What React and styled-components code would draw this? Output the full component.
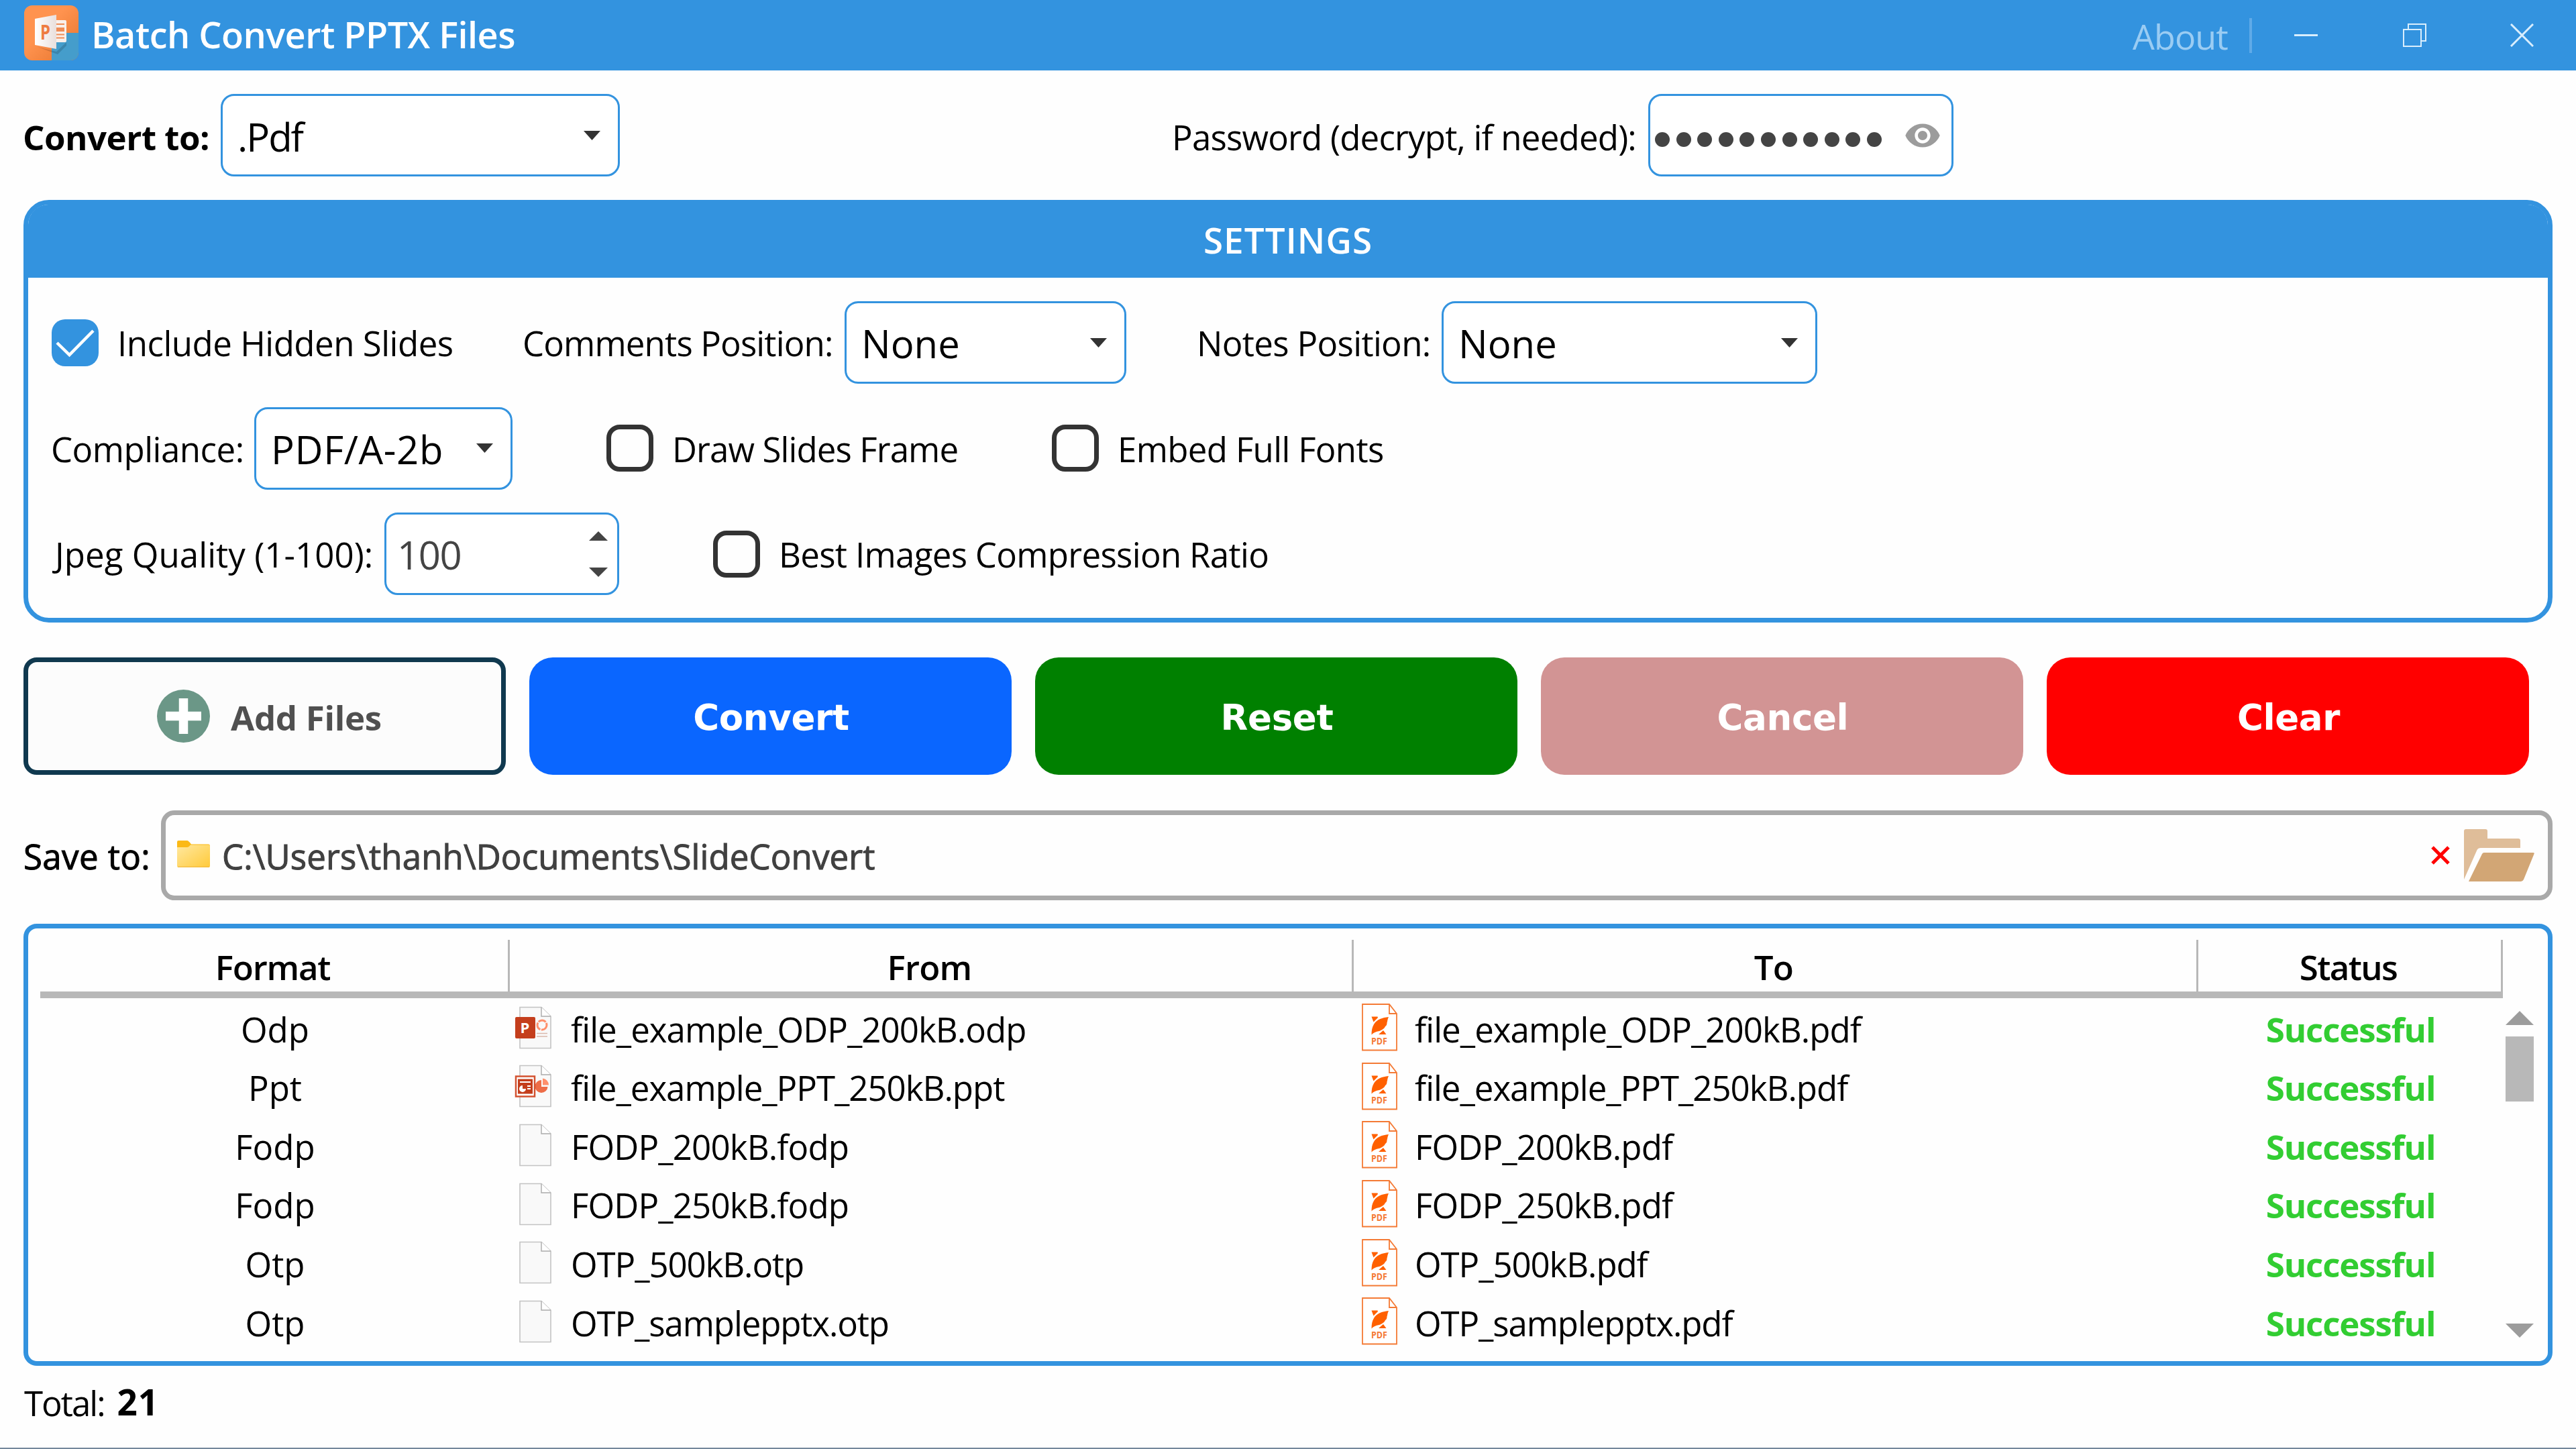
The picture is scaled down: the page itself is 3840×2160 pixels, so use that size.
import React from "react";
import styled, { createGlobalStyle } from "styled-components";
import { MdVisibility } from "react-icons/md";

const blue = "#3393df";

const GlobalStyle = createGlobalStyle`
  * {
    box-sizing: border-box;
  }

  body {
    margin: 0;
    background: #fefefe;
    color: #000;
    font-family: "Open Sans", "Noto Sans", sans-serif;
    font-size: 51px;
    line-height: 1.3;
  }
`;

const Window = styled.div`
  width: 3840px;
  height: 2160px;
  display: flex;
  flex-direction: column;
  overflow: hidden;
  white-space: nowrap;
`;

const TitleBar = styled.header`
  display: flex;
  align-items: center;
  flex: none;
  height: 105px;
  padding: 0 63px 0 36px;
  background: ${blue};
  color: #fff;
`;

const Logo = styled.svg`
  width: 81px;
  height: 82px;
  margin-bottom: 7px;
`;

const Title = styled.h1`
  flex: 1;
  margin: 0 0 0 19px;
  padding-bottom: 3px;
  font-size: 54px;
  font-weight: 600;
  letter-spacing: -0.52px;
`;

const About = styled.a`
  padding-top: 2px;
  margin-right: 32px;
  color: #9accf3;
  font-size: 52px;
  letter-spacing: -0.9px;
`;

const Divider = styled.span`
  width: 4px;
  height: 52px;
  background: #5faae8;
`;

const WindowIcon = styled.svg`
  width: 35px;
  height: 35px;
  margin-left: ${({ gap }) => gap}px;
  fill: none;
  stroke: #d9eefd;
  stroke-width: ${({ weight }) => weight || 3};
`;

const TopRow = styled.div`
  display: flex;
  align-items: center;
  flex: none;
  height: 123px;
  margin: 35px 35px 0 34px;
`;

const Label = styled.label`
  flex: none;
  width: ${({ width }) => width}px;
  margin-left: ${({ gap }) => gap || 0}px;
  padding-top: ${({ drop }) => drop || 2}px;
  font-weight: ${({ weight }) => weight || 400};
  letter-spacing: ${({ track }) => track || 0}px;
`;

const SaveLabel = styled(Label)`
  -webkit-text-stroke: 1px #000;
`;

const Field = styled.div`
  display: flex;
  align-items: center;
  flex: none;
  width: ${({ width }) => width}px;
  height: 123px;
  padding: 0 26px 0 22px;
  background: #fff;
  border: 3px solid ${blue};
  border-radius: 20px;
`;

const Value = styled.span`
  flex: 1;
  padding-top: ${({ drop }) => drop || 3}px;
  font-size: 58px;
  letter-spacing: ${({ track }) => track || 0}px;
`;

const Caret = styled.svg`
  width: 25px;
  height: 14px;
  fill: #333;
`;

const PasswordField = styled(Field)`
  padding: 0 15px 0 7px;
  justify-content: space-between;
`;

const Dots = styled.div`
  display: flex;
  gap: 9.6px;
  margin-top: 13px;
`;

const Dot = styled.i`
  width: 22px;
  height: 22px;
  border-radius: 50%;
  background: #444;
`;

const Eye = styled(MdVisibility)`
  width: 56px;
  height: 56px;
  color: #9c9c9c;
`;

const SpinnerField = styled(Field)`
  padding: 0 14px 0 16px;
  color: #444;
`;

const Spinner = styled.div`
  display: flex;
  flex-direction: column;
  gap: 40px;

  svg {
    width: 28px;
    height: 14px;
    fill: #444;
  }
`;

const Settings = styled.section`
  flex: none;
  height: 630px;
  margin: 35px 35px 0;
  border: 7px solid ${blue};
  border-radius: 38px;
`;

const SettingsTitle = styled.h2`
  height: 109px;
  margin: 0;
  padding-top: 19px;
  background: ${blue};
  border-radius: 30px 30px 0 0;
  color: #fff;
  font-size: 53px;
  font-weight: 600;
  letter-spacing: 1.04px;
  text-align: center;
`;

const SettingsBody = styled.div`
  display: flex;
  flex-direction: column;
  gap: 34.5px;
  padding: 35px 35px 0 31px;
`;

const SettingsRow = styled.div`
  display: flex;
  align-items: center;
  height: 123px;
`;

const Box = styled.span`
  display: flex;
  flex: none;
  width: 70px;
  height: 70px;
  margin-left: ${({ gap }) => gap}px;
  background: ${({ checked }) => (checked ? blue : "transparent")};
  border: ${({ checked }) => (checked ? "none" : "7px solid #333")};
  border-radius: 20px;

  svg {
    width: 70px;
    height: 70px;
    fill: none;
    stroke: #fff;
    stroke-width: 4.5;
  }
`;

const Actions = styled.div`
  display: grid;
  grid-template-columns: repeat(5, 719px);
  gap: 35px;
  flex: none;
  height: 175px;
  margin: 52px 0 0 35px;
`;

const Button = styled.button`
  padding: 4px 0 0 2px;
  border: none;
  border-radius: 35px;
  background: ${({ color }) => color};
  color: #fff;
  font: bold 53px "DejaVu Sans", sans-serif;
  letter-spacing: -0.35px;
`;

const AddButton = styled.button`
  display: flex;
  align-items: center;
  padding: 0 0 0 192px;
  border: 7px solid #10394f;
  border-radius: 20px;
  background: #fcfcfc;
  color: #505050;
  font: 700 51px "Open Sans", sans-serif;
  letter-spacing: -0.3px;

  svg {
    width: 79px;
    height: 79px;
    margin-right: 31px;
  }

  span {
    padding-top: 3px;
  }
`;

const SaveRow = styled.div`
  display: flex;
  align-items: center;
  flex: none;
  height: 134px;
  margin: 53px 35px 0;
`;

const PathField = styled.div`
  display: flex;
  align-items: center;
  flex: 1;
  height: 134px;
  padding: 0 20px 0 17px;
  border: 7px solid #a9a9a9;
  border-radius: 20px;
`;

const Path = styled.span`
  flex: 1;
  padding: 3px 0 0 18px;
  color: #404040;
  font-weight: 500;
  letter-spacing: 0.1px;
  -webkit-text-stroke: 1px #404040;
`;

const FolderIcon = styled.svg`
  width: 49px;
  height: 40px;
  margin-bottom: 4px;
`;

const ClearIcon = styled.svg`
  width: 28px;
  height: 28px;
  margin-right: 21px;
  stroke: #f00;
  stroke-width: 5;
`;

const OpenFolderIcon = styled.svg`
  width: 105px;
  height: 78px;
`;

const Table = styled.section`
  display: flex;
  flex: none;
  height: 659px;
  margin: 35px 35px 0;
  padding: 17px 20px 0 18px;
  border: 7px solid ${blue};
  border-radius: 20px;
`;

const Grid = styled.div`
  width: 3671px;
`;

const GridRow = styled.div`
  display: grid;
  grid-template-columns: 700px 1258px 1259px 454px;
  align-items: center;
  height: 87.6px;
`;

const GridHead = styled(GridRow)`
  height: 87px;
  align-items: stretch;
  border-bottom: 10px solid #b8b8b8;
`;

const HeadCell = styled.div`
  padding: 7px 4px 0 0;
  border-right: 3px solid #b8b8b8;
  font-weight: 600;
  letter-spacing: ${({ track }) => track}px;
  text-align: center;
`;

const Cell = styled.div`
  padding-top: 4px;
  text-align: center;
`;

const FileCell = styled.div`
  display: flex;
  align-items: center;
  padding-left: ${({ inset }) => inset}px;

  span {
    padding: 4px 0 0 ${({ space }) => space || 28}px;
    letter-spacing: ${({ track }) => track || -1}px;
  }
`;

const Status = styled(Cell)`
  color: #32cd32;
  font-weight: 700;
  letter-spacing: -1.1px;
`;

const DocSvg = styled.svg`
  width: 56px;
  height: 64px;
`;

const PdfSvg = styled.svg`
  width: 53px;
  height: 71px;
`;

const ScrollBar = styled.div`
  display: flex;
  flex-direction: column;
  align-items: center;
  width: 42px;
  height: 487px;
  margin: 106px 0 0 4px;

  svg {
    width: 42px;
    height: 21px;
    fill: #9c9c9c;
  }
`;

const Thumb = styled.div`
  width: 42px;
  height: 97px;
  margin: 17px 0 auto;
  background: #b8b8b8;
`;

const Footer = styled.footer`
  display: flex;
  flex: 1;
  padding: 22px 0 0 36px;
  border-bottom: 2px solid #74879b;
  letter-spacing: -2px;

  strong {
    margin-left: 19px;
    font-size: 53px;
    line-height: 64px;
    letter-spacing: 1px;
  }
`;

const Down = () => (
  <Caret viewBox="0 0 25 14">
    <path d="M0 0h25L12.5 14z" />
  </Caret>
);

const Select = ({ width, value, track, drop }) => (
  <Field width={width}>
    <Value track={track} drop={drop}>
      {value}
    </Value>
    <Down />
  </Field>
);

const AppLogo = () => (
  <Logo viewBox="0 0 81 82">
    <defs>
      <linearGradient id="door" x1="0" x2="1">
        <stop offset="0" stopColor="#fff" />
        <stop offset="1" stopColor="#e9dfdc" />
      </linearGradient>
      <linearGradient id="shade" x1="0" y1="0" x2="1" y2="1">
        <stop offset="0.4" stopColor="#ff934f" />
        <stop offset="1" stopColor="#e5732c" />
      </linearGradient>
      <clipPath id="tile">
        <rect width="81" height="82" rx="12" />
      </clipPath>
    </defs>
    <g clipPath="url(#tile)">
      <rect width="81" height="82" fill="url(#shade)" />
      <rect x="41" y="41" width="40" height="41" fill="#459dcb" />
    </g>
    <path d="M20 62L48 69L63 55V60L50 73z" fill="#000" opacity="0.15" />
    <rect x="46" y="22" width="17" height="33" rx="2" fill="#f8f0ec" />
    <path d="M48 28h12M48 43.5h12M48 48.5h12" stroke="#ef8d57" strokeWidth="1.8" />
    <rect x="48" y="33" width="12" height="6" fill="#ef8d57" />
    <path d="M16 20L48 14V65L16 59z" fill="url(#door)" />
    <text x="24" y="51" fontSize="31" fontWeight="700" fill="#ee7c42" textLength="15" lengthAdjust="spacingAndGlyphs">
      P
    </text>
  </Logo>
);

const DocIcon = ({ kind }) => (
  <DocSvg viewBox="0 0 56 64">
    <path d="M8 1.5H40L54 15V62.5H8z" fill="#f9f9f9" stroke="#c3c3c3" strokeWidth="1.6" />
    <path d="M40 1.5V15H54" fill="#fff" stroke="#aaa" strokeWidth="1.4" />
    {kind === "odp" && (
      <>
        <circle cx="41" cy="28" r="7" fill="none" stroke="#ff8f6b" strokeWidth="3" strokeDasharray="12 1.5" />
        <path d="M33 40.5H49M33 45H49" stroke="#d9b8ac" strokeWidth="1.5" />
        <rect x="1" y="16" width="30" height="32" rx="2" fill="#c43e1c" />
        <text x="8.5" y="40" fontSize="22" fontWeight="700" fill="#fff">
          P
        </text>
      </>
    )}
    {kind === "ppt" && (
      <>
        <path d="M40 23V33H49.5A9.5 9.5 0 1 1 40 23z" fill="#ed6c47" />
        <path d="M42 20.5A10 10 0 0 1 51 30.5H42z" fill="#ff8f6b" />
        <rect x="2" y="17.5" width="28" height="30" fill="#fff" stroke="#d35230" strokeWidth="2.5" />
        <rect x="5" y="21.5" width="22" height="22" fill="#c43e1c" />
        <path d="M8 26H24M19 32H24M19 36H24" stroke="#fff" strokeWidth="2" />
        <path d="M12 31V36H17A5 5 0 1 1 12 31z" fill="#fff" />
      </>
    )}
  </DocSvg>
);

const PdfIcon = () => (
  <PdfSvg viewBox="0 0 53 71">
    <path d="M1 1H41L52 15V69.5H1z" fill="#fff" stroke="#f47a35" strokeWidth="1.8" />
    <path d="M41 1V15H52" fill="none" stroke="#f47a35" strokeWidth="1.8" />
    <path
      d="M14.5 19.5H23.5L24 21L17.5 27.5zM40 20C38 24 38.5 26 37.5 28.5C37.5 31 37 33 35 34C34 37 30 39.5 26 41C21 42 17 43.5 14.5 46.5C14.5 40 15.5 35 18 31C22 24 30 21 40 20zM32 40L36.5 46H25z"
      fill="#ff6000"
    />
    <text x="14" y="60.5" fontSize="13.5" fontWeight="700" fill="#f47a35" textLength="24" lengthAdjust="spacingAndGlyphs">
      PDF
    </text>
  </PdfSvg>
);

const actions = [
  { text: "Convert", color: "#0a66ff" },
  { text: "Reset", color: "#008000" },
  { text: "Cancel", color: "#d29494" },
  { text: "Clear", color: "#ff0000" },
];

const files = [
  { format: "Odp", name: "file_example_ODP_200kB", ext: "odp", kind: "odp", track: -0.95 },
  { format: "Ppt", name: "file_example_PPT_250kB", ext: "ppt", kind: "ppt", track: -1.02 },
  { format: "Fodp", name: "FODP_200kB", ext: "fodp", track: -0.85 },
  { format: "Fodp", name: "FODP_250kB", ext: "fodp", track: -0.85 },
  { format: "Otp", name: "OTP_500kB", ext: "otp", track: -1.1 },
  { format: "Otp", name: "OTP_samplepptx", ext: "otp", track: -1.12 },
];

const App = () => {
  return (
    <Window>
      <GlobalStyle />
      <TitleBar>
        <AppLogo />
        <Title>Batch Convert PPTX Files</Title>
        <About>About</About>
        <Divider />
        <WindowIcon viewBox="0 0 35 35" gap={63}>
          <path d="M0 17.5H35" />
        </WindowIcon>
        <WindowIcon viewBox="0 0 35 35" gap={127} weight={2}>
          <path d="M1 9H27V34H1zM8 9V1H34V26H27" />
        </WindowIcon>
        <WindowIcon viewBox="0 0 35 35" gap={125}>
          <path d="M1 1L34 34M34 1L1 34" />
        </WindowIcon>
      </TitleBar>

      <TopRow>
        <Label width={295} weight={700} track={-0.5} drop={5}>
          Convert to:
        </Label>
        <Select width={595} value=".Pdf" track={-2} drop={5} />
        <Label width={710} gap={823} track={-0.8} drop={5}>
          Password (decrypt, if needed):
        </Label>
        <PasswordField width={455}>
          <Dots>
            {Array.from({ length: 11 }, (_, index) => (
              <Dot key={index} />
            ))}
          </Dots>
          <Eye />
        </PasswordField>
      </TopRow>

      <Settings>
        <SettingsTitle>SETTINGS</SettingsTitle>
        <SettingsBody>
          <SettingsRow>
            <Box checked gap={4}>
              <svg viewBox="0 0 70 70">
                <path d="M8 35L26.5 53L62 17" />
              </svg>
            </Box>
            <Label width={604} gap={28} track={-0.5}>
              Include Hidden Slides
            </Label>
            <Label width={480} track={-0.85}>
              Comments Position:
            </Label>
            <Select width={420} value="None" />
            <Label width={365} gap={105} track={-0.66}>
              Notes Position:
            </Label>
            <Select width={560} value="None" />
          </SettingsRow>
          <SettingsRow>
            <Label width={303} gap={3} track={-0.5}>
              Compliance:
            </Label>
            <Select width={385} value="PDF/A-2b" track={0.6} />
            <Box gap={140} />
            <Label width={566} gap={28} track={-0.9}>
              Draw Slides Frame
            </Label>
            <Box gap={0} />
            <Label gap={28} track={-0.66}>
              Embed Full Fonts
            </Label>
          </SettingsRow>
          <SettingsRow>
            <Label width={491} gap={9} track={0.06}>
              Jpeg Quality (1-100):
            </Label>
            <SpinnerField width={350}>
              <Value track={-1.4}>100</Value>
              <Spinner>
                <svg viewBox="0 0 28 14">
                  <path d="M0 14H28L14 0z" />
                </svg>
                <svg viewBox="0 0 28 14">
                  <path d="M0 0H28L14 14z" />
                </svg>
              </Spinner>
            </SpinnerField>
            <Box gap={140} />
            <Label gap={28} track={-0.68}>
              Best Images Compression Ratio
            </Label>
          </SettingsRow>
        </SettingsBody>
      </Settings>

      <Actions>
        <AddButton>
          <svg viewBox="0 0 79 79">
            <circle cx="39.5" cy="39.5" r="39.5" fill="#6b9787" />
            <path d="M13 39.5H66M39.5 13V66" stroke="#fff" strokeWidth="13.5" />
          </svg>
          <span>Add Files</span>
        </AddButton>
        {actions.map(({ text, color }) => (
          <Button key={text} color={color}>
            {text}
          </Button>
        ))}
      </Actions>

      <SaveRow>
        <SaveLabel width={205} weight={500} track={0.4}>
          Save to:
        </SaveLabel>
        <PathField>
          <FolderIcon viewBox="0 0 49 40">
            <defs>
              <linearGradient id="folder" x1="0" y1="0" x2="1" y2="1">
                <stop offset="0" stopColor="#ffe8a0" />
                <stop offset="1" stopColor="#ffca3a" />
              </linearGradient>
            </defs>
            <path d="M0 2Q0 0 2 0H15Q17 0 21 5.5H47Q49 5.5 49 8V20H0z" fill="#fbb916" />
            <path d="M0 10H15Q17 10 20 6.5H47Q49 6.5 49 8V38Q49 40 47 40H2Q0 40 0 38z" fill="url(#folder)" />
            <path d="M1 39.2H48" stroke="#f0b63c" />
          </FolderIcon>
          <Path>C:\Users\thanh\Documents\SlideConvert</Path>
          <ClearIcon viewBox="0 0 28 28">
            <path d="M2 2L26 26M26 2L2 26" />
          </ClearIcon>
          <OpenFolderIcon viewBox="0 0 105 78">
            <path d="M0 75V3Q0 0 3 0H32Q35 0 35 3V14H81Q84 14 84 17V28H25Q21 28 19.500 31z" fill="#dfbd99" />
            <path d="M27 37Q28 35 30 35H103Q105.500 35 104.500 37L89 75Q87.500 78 85 78H7z" fill="#d2a675" />
          </OpenFolderIcon>
        </PathField>
      </SaveRow>

      <Table>
        <Grid>
          <GridHead>
            <HeadCell track={-1.2}>Format</HeadCell>
            <HeadCell track={-0.8}>From</HeadCell>
            <HeadCell track={-0.8}>To</HeadCell>
            <HeadCell track={-1.6}>Status</HeadCell>
          </GridHead>
          {files.map(({ format, name, ext, kind, track }) => (
            <GridRow key={name}>
              <Cell>{format}</Cell>
              <FileCell inset={7} track={track}>
                <DocIcon kind={kind} />
                <span>
                  {name}.{ext}
                </span>
              </FileCell>
              <FileCell inset={12} space={26} track={track}>
                <PdfIcon />
                <span>{name}.pdf</span>
              </FileCell>
              <Status>Successful</Status>
            </GridRow>
          ))}
        </Grid>
        <ScrollBar>
          <svg viewBox="0 0 42 21">
            <path d="M0 21H42L21 0z" />
          </svg>
          <Thumb />
          <svg viewBox="0 0 42 21">
            <path d="M0 0H42L21 21z" />
          </svg>
        </ScrollBar>
      </Table>

      <Footer>
        Total: <strong>21</strong>
      </Footer>
    </Window>
  );
};

export default App;
